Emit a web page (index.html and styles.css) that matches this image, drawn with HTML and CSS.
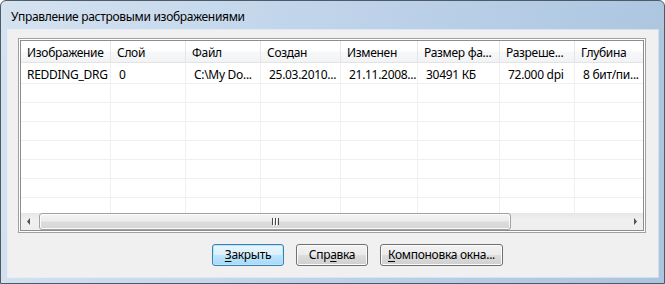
FILE: index.html
```html
<!DOCTYPE html>
<html>
<head>
  <meta charset="utf-8">
  <title>Управление растровыми изображениями</title>
  <link rel="stylesheet" href="styles.css">
</head>
<body>
  <div class="window">
    <div class="title">Управление растровыми изображениями</div>
    <div class="client">
      <div class="list">
        <div class="list-inner">
          <div class="grid">
            <div class="hcell first">Изображение</div>
            <div class="hcell">Слой</div>
            <div class="hcell">Файл</div>
            <div class="hcell">Создан</div>
            <div class="hcell">Изменен</div>
            <div class="hcell">Размер фа...</div>
            <div class="hcell">Разреше...</div>
            <div class="hcell">Глубина</div>

            <div class="cell first top">REDDING_DRG</div>
            <div class="cell top">0</div>
            <div class="cell top">C:\My Do...</div>
            <div class="cell top">25.03.2010...</div>
            <div class="cell top">21.11.2008...</div>
            <div class="cell top">30491 КБ</div>
            <div class="cell top">72.000 dpi</div>
            <div class="cell top">8 бит/пи...</div>
          </div>
          <div class="grid empty" id="empty"></div>
          <div class="hscroll">
            <div class="arrow">
              <svg width="17" height="17" viewBox="0 0 17 17"><path d="M9 5 L6 8.5 L9 12 Z" fill="#505050"/></svg>
            </div>
            <div class="track">
              <div class="thumb">
                <svg width="7" height="8" viewBox="0 0 7 8">
                  <rect x="0" y="0" width="1" height="7" fill="#4a4a4a"/>
                  <rect x="3" y="0" width="1" height="7" fill="#4a4a4a"/>
                  <rect x="6" y="0" width="1" height="7" fill="#4a4a4a"/>
                  <rect x="1" y="1" width="1" height="7" fill="#fff"/>
                  <rect x="4" y="1" width="1" height="7" fill="#fff"/>
                </svg>
              </div>
            </div>
            <div class="arrow">
              <svg width="17" height="17" viewBox="0 0 17 17"><path d="M8 5 L11 8.5 L8 12 Z" fill="#505050"/></svg>
            </div>
          </div>
        </div>
      </div>
      <div class="actions">
        <button class="btn default"><u>З</u>акрыть</button>
        <button class="btn">Спр<u>а</u>вка</button>
        <button class="btn wide"><u>К</u>омпоновка окна...</button>
      </div>
    </div>
  </div>

  <script type="text/javascript">
    // пустые строки списка
    const empty = document.getElementById("empty");
    for (let i = 0; i < 7 * 8; i++) {
      const cell = document.createElement("div");
      cell.classList.add("cell");
      empty.appendChild(cell);
    }
  </script>
</body>
</html>
```

FILE: styles.css
```css
* {
  box-sizing: border-box;
}

html, body {
  margin: 0;
}

body {
  width: 665px;
  height: 284px;
  overflow: hidden;
  background: #ffffff;
  font-family: "Noto Sans", "Liberation Sans", sans-serif;
  font-size: 12px;
  letter-spacing: -0.3px;
  color: #000;
}

/* рамка окна */
.window {
  width: 665px;
  height: 284px;
  border: 1px solid #4d5b69;
  border-radius: 6px 6px 0 0;
  background: linear-gradient(100deg, #d5e2f0 0%, #c2d6eb 40%, #abc4df 100%);
  display: flex;
  flex-direction: column;
  padding: 0 6px 6px 7px;
}

.title {
  height: 29px;
  padding: 8px 0 0 3px;
  line-height: 16px;
  white-space: nowrap;
}

.client {
  flex: 1;
  background: #f0f0f0;
  padding: 8px 12px 0 10px;
  box-shadow: 0 0 0 1px rgba(255, 255, 255, 0.45);
}

/* список */
.list {
  height: 195px;
  border: 1px solid #a0a0a0;
  padding: 1px;
  background: #fff;
}

.list-inner {
  height: 100%;
  border: 1px solid #8d8d8d;
  display: flex;
  flex-direction: column;
  overflow: hidden;
  background: #fff;
}

.grid {
  display: grid;
  grid-template-columns: 90px 75px 75px 80px 77px 82px 75px 90px;
  width: 644px;
}

.grid.empty {
  flex: 1;
  overflow: hidden;
  grid-auto-rows: 19px;
  align-content: start;
}

.hcell {
  height: 22px;
  padding: 4px 0 0 6px;
  line-height: 16px;
  white-space: nowrap;
  overflow: hidden;
  border-right: 1px solid #e2e5ea;
  border-bottom: 1px solid #e3e3e3;
  background: linear-gradient(#ffffff 0%, #ffffff 45%, #f6f7f9 55%, #f2f3f5 100%);
}

.cell {
  height: 19px;
  padding: 2px 0 0 8px;
  line-height: 16px;
  white-space: nowrap;
  overflow: hidden;
  border-right: 1px solid #f0f0f0;
  border-bottom: 1px solid #f0f0f0;
}

.cell.top {
  height: 21px;
  padding-top: 4px;
}

.cell.first {
  padding-left: 6px;
}

/* горизонтальная прокрутка */
.hscroll {
  height: 17px;
  display: flex;
  background: linear-gradient(#e6e6e6, #f0f0f0 40%, #eeeeee);
}

.arrow {
  width: 17px;
  height: 17px;
}

.arrow svg {
  display: block;
}

.track {
  flex: 1;
  padding: 0 0 0 1px;
}

.thumb {
  width: 472px;
  height: 17px;
  border: 1px solid #a2a2a2;
  border-radius: 3px;
  background: linear-gradient(#f5f5f5 0%, #ececec 45%, #dcdcdc 55%, #d6d6d6 100%);
  box-shadow: inset 0 0 0 1px #fbfbfb;
  display: flex;
  align-items: center;
  justify-content: center;
}

.thumb svg {
  display: block;
}

/* кнопки */
.actions {
  display: flex;
  gap: 12px;
  margin-top: 11px;
  padding-left: 194px;
}

.btn {
  width: 72px;
  height: 22px;
  padding: 0;
  font-family: "Noto Sans", "Liberation Sans", sans-serif;
  font-size: 12px;
  letter-spacing: -0.3px;
  line-height: 16px;
  color: #000;
  border: 1px solid #707070;
  border-radius: 3px;
  background: linear-gradient(#f2f2f2 0%, #ebebeb 50%, #dddddd 51%, #cfcfcf 100%);
  box-shadow: inset 0 0 0 1px #fcfcfc;
}

.btn u {
  text-underline-offset: 2px;
}

.btn.default {
  border-color: #3c7fb1;
  background: linear-gradient(#eaf6fd 0%, #d9f0fc 50%, #bee6fd 51%, #a7d9f5 100%);
  box-shadow: inset 0 0 0 1px #b7e5fb;
}

.btn.wide {
  width: 123px;
}
```
